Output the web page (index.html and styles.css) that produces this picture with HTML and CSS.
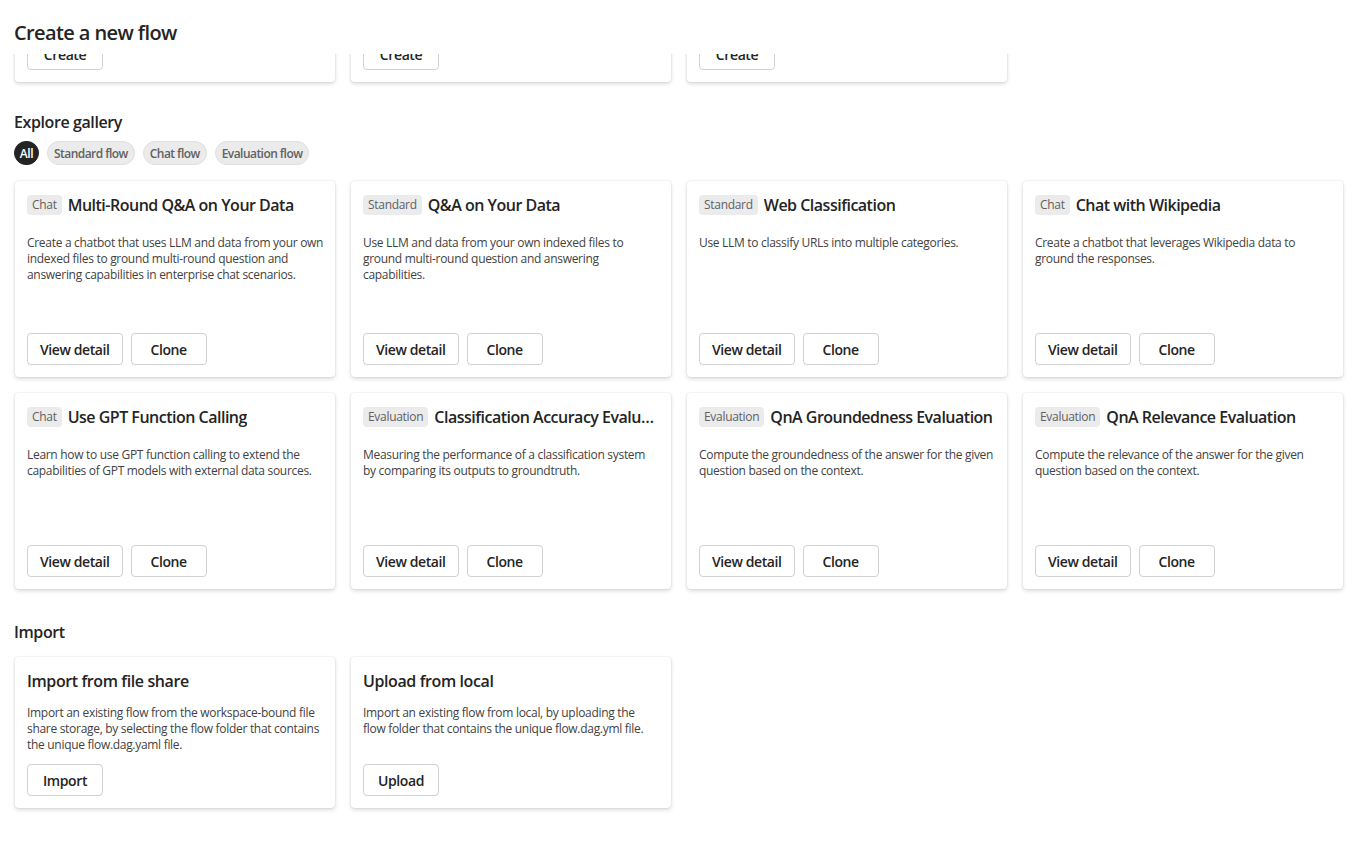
FILE: index.html
```html
<!DOCTYPE html>
<html lang="en">
<head>
<meta charset="utf-8">
<title>Flows</title>
<link rel="stylesheet" href="styles.css">
</head>
<body>
<div class="page">
  <header class="page-header">
    <h1 class="page-title">Create a new flow</h1>
  </header>
  <section class="create-row">
    <div class="card create-card"><button class="btn">Create</button></div>
    <div class="card create-card"><button class="btn">Create</button></div>
    <div class="card create-card"><button class="btn">Create</button></div>
  </section>

  <h2 class="section-title gallery-title">Explore gallery</h2>
  <div class="pills">
    <span class="pill pill-active">All</span>
    <span class="pill">Standard flow</span>
    <span class="pill">Chat flow</span>
    <span class="pill">Evaluation flow</span>
  </div>

  <section class="gallery">
    <div class="card g-card">
      <div class="g-head"><span class="tag">Chat</span><span class="g-title">Multi-Round Q&amp;A on Your Data</span></div>
      <p class="desc">Create a chatbot that uses LLM and data from your own indexed files to ground multi-round question and answering capabilities in enterprise chat scenarios.</p>
      <div class="actions"><button class="btn">View detail</button><button class="btn">Clone</button></div>
    </div>
    <div class="card g-card">
      <div class="g-head"><span class="tag">Standard</span><span class="g-title">Q&amp;A on Your Data</span></div>
      <p class="desc">Use LLM and data from your own indexed files to ground multi-round question and answering capabilities.</p>
      <div class="actions"><button class="btn">View detail</button><button class="btn">Clone</button></div>
    </div>
    <div class="card g-card">
      <div class="g-head"><span class="tag">Standard</span><span class="g-title">Web Classification</span></div>
      <p class="desc">Use LLM to classify URLs into multiple categories.</p>
      <div class="actions"><button class="btn">View detail</button><button class="btn">Clone</button></div>
    </div>
    <div class="card g-card">
      <div class="g-head"><span class="tag">Chat</span><span class="g-title">Chat with Wikipedia</span></div>
      <p class="desc">Create a chatbot that leverages Wikipedia data to ground the responses.</p>
      <div class="actions"><button class="btn">View detail</button><button class="btn">Clone</button></div>
    </div>
    <div class="card g-card">
      <div class="g-head"><span class="tag">Chat</span><span class="g-title">Use GPT Function Calling</span></div>
      <p class="desc">Learn how to use GPT function calling to extend the capabilities of GPT models with external data sources.</p>
      <div class="actions"><button class="btn">View detail</button><button class="btn">Clone</button></div>
    </div>
    <div class="card g-card">
      <div class="g-head"><span class="tag">Evaluation</span><span class="g-title">Classification Accuracy Evaluation</span></div>
      <p class="desc">Measuring the performance of a classification system by comparing its outputs to groundtruth.</p>
      <div class="actions"><button class="btn">View detail</button><button class="btn">Clone</button></div>
    </div>
    <div class="card g-card">
      <div class="g-head"><span class="tag">Evaluation</span><span class="g-title">QnA Groundedness Evaluation</span></div>
      <p class="desc">Compute the groundedness of the answer for the given question based on the context.</p>
      <div class="actions"><button class="btn">View detail</button><button class="btn">Clone</button></div>
    </div>
    <div class="card g-card">
      <div class="g-head"><span class="tag">Evaluation</span><span class="g-title">QnA Relevance Evaluation</span></div>
      <p class="desc">Compute the relevance of the answer for the given question based on the context.</p>
      <div class="actions"><button class="btn">View detail</button><button class="btn">Clone</button></div>
    </div>
  </section>

  <h2 class="section-title import-title">Import</h2>
  <section class="import-row">
    <div class="card i-card">
      <div class="i-title">Import from file share</div>
      <p class="desc i-desc">Import an existing flow from the workspace-bound file share storage, by selecting the flow folder that contains the unique flow.dag.yaml file.</p>
      <div class="actions"><button class="btn">Import</button></div>
    </div>
    <div class="card i-card">
      <div class="i-title">Upload from local</div>
      <p class="desc i-desc">Import an existing flow from local, by uploading the flow folder that contains the unique flow.dag.yml file.</p>
      <div class="actions"><button class="btn">Upload</button></div>
    </div>
  </section>
</div>
</body>
</html>
```
FILE: styles.css
```css
* { box-sizing: border-box; }
html, body { margin: 0; padding: 0; background: #ffffff; }
body {
  font-family: "Open Sans", "Noto Sans", "Liberation Sans", sans-serif;
  color: #242424;
  overflow: hidden;
}
.page {
  padding: 0 14px 40px 14px;
  width: 1370px;
}
.page-header {
  position: relative;
  z-index: 2;
  background: #ffffff;
  height: 54px;
  padding-top: 19px;
  margin: 0 -14px;
  padding-left: 14px;
}
.page-title {
  margin: 0;
  font-size: 20px;
  line-height: 28px;
  font-weight: 600;
  letter-spacing: -0.6px;
}
.create-row {
  display: flex;
  gap: 16px;
  margin-top: -120px;
  padding-left: 1px;
}
.card {
  background: #ffffff;
  border-radius: 4px;
  box-shadow: 0 0 2px rgba(0,0,0,0.12), 0 2px 4px rgba(0,0,0,0.14);
}
.create-card {
  width: 320px;
  height: 148px;
  padding: 12px;
  display: flex;
  flex-direction: column;
  justify-content: flex-end;
}
.btn {
  font-family: inherit;
  font-size: 14px;
  font-weight: 600;
  letter-spacing: -0.4px;
  color: #242424;
  background: #ffffff;
  border: 1px solid #d1d1d1;
  border-radius: 4px;
  height: 32px;
  min-width: 76px;
  padding: 0 12px;
  align-self: flex-start;
  cursor: pointer;
  white-space: nowrap;
}
.section-title {
  margin: 0;
  font-size: 16px;
  line-height: 22px;
  font-weight: 600;
  letter-spacing: -0.4px;
}
.gallery-title { margin-top: 29px; }
.pills {
  display: flex;
  gap: 8px;
  margin-top: 8px;
  height: 24px;
  align-items: center;
}
.pill {
  display: inline-flex;
  align-items: center;
  height: 24px;
  padding: 0 6px;
  border-radius: 12px;
  background: #ebebeb;
  border: 1px solid #e0e0e0;
  font-size: 12px;
  font-weight: 600;
  letter-spacing: -0.55px;
  color: #616161;
  white-space: nowrap;
}
.pill-active {
  background: #242424;
  border-color: #242424;
  color: #ffffff;
  width: 25px;
  padding: 0;
  justify-content: center;
  letter-spacing: -0.3px;
}
.gallery {
  display: grid;
  grid-template-columns: repeat(4, 320px);
  gap: 16px;
  margin-top: 16px;
  padding-left: 1px;
}
.g-card {
  height: 196px;
  padding: 12px;
  display: flex;
  flex-direction: column;
}
.g-head {
  display: flex;
  align-items: center;
  gap: 6px;
  height: 24px;
  min-width: 0;
}
.tag {
  flex: none;
  height: 20px;
  line-height: 20px;
  padding: 0 5px;
  border-radius: 4px;
  background: #ebebeb;
  color: #616161;
  font-size: 12px;
  letter-spacing: -0.3px;
}
.g-title {
  font-size: 16px;
  font-weight: 600;
  line-height: 22px;
  letter-spacing: -0.5px;
  white-space: nowrap;
  overflow: hidden;
  text-overflow: ellipsis;
  min-width: 0;
}
.desc {
  margin: 18px -1px 0 0;
  font-size: 12px;
  line-height: 16px;
  letter-spacing: -0.3px;
  color: #424242;
  flex: 1;
}
.actions {
  display: flex;
  gap: 8px;
}
.import-title { margin-top: 32px; }
.import-row {
  display: flex;
  gap: 16px;
  margin-top: 14px;
  padding-left: 1px;
}
.i-card {
  width: 320px;
  padding: 12px;
  display: flex;
  flex-direction: column;
}
.i-title {
  font-size: 16px;
  font-weight: 600;
  line-height: 24px;
  letter-spacing: -0.4px;
}
.i-desc {
  margin: 12px 1px 11px 0;
}
```
